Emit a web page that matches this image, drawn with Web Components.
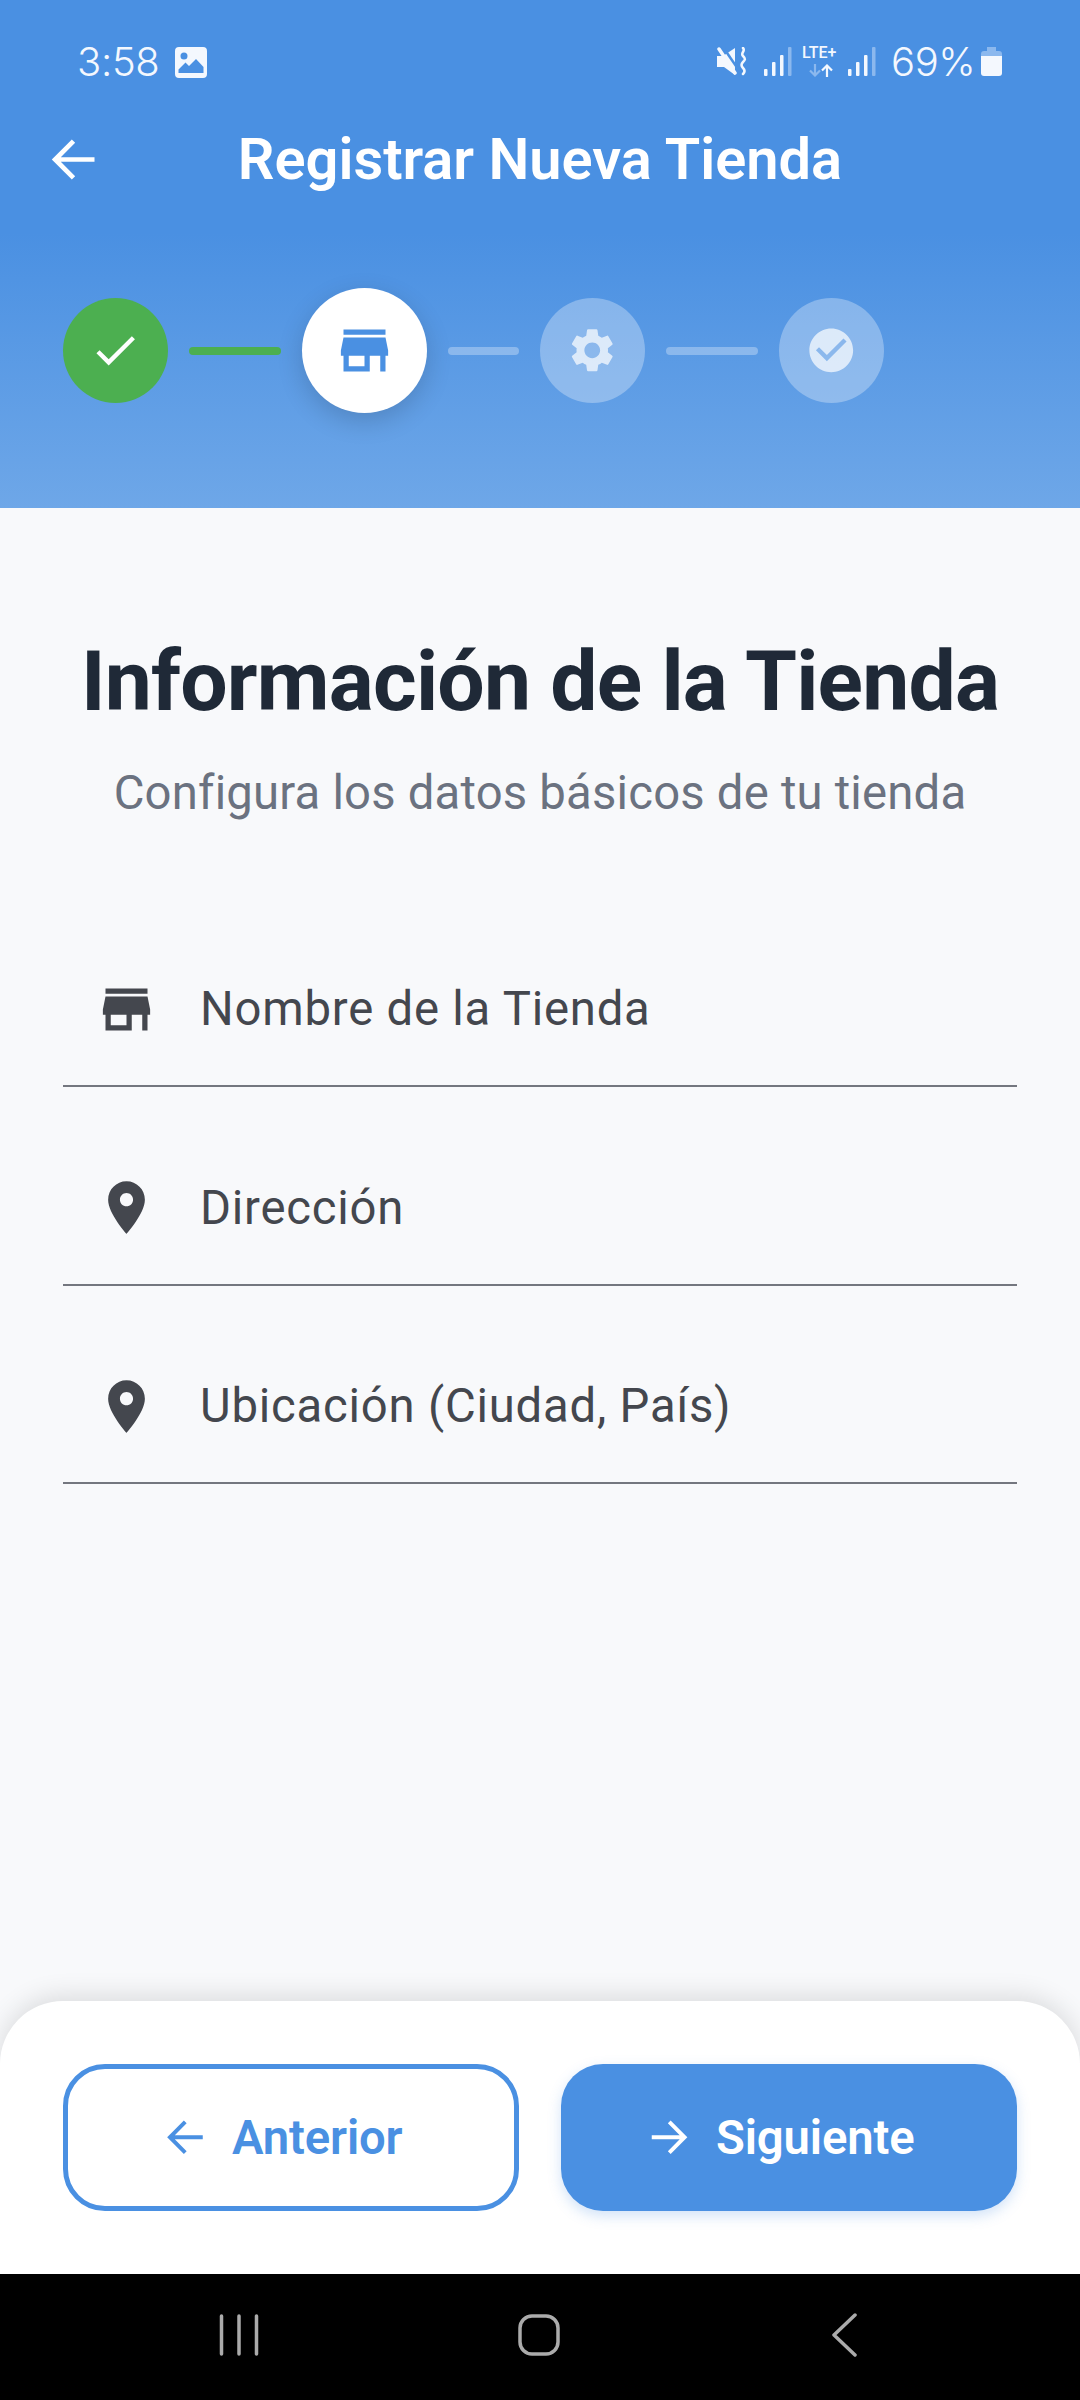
<!DOCTYPE html>
<html lang="es">
<head>
<meta charset="utf-8">
<title>Registrar Nueva Tienda</title>
<style>
  html, body { margin: 0; padding: 0; }
  body { width: 1080px; height: 2400px; overflow: hidden; font-family: Roboto, "Liberation Sans", sans-serif; }
</style>
</head>
<body>
<app-screen>
  <status-bar slot="header"></status-bar>
  <app-bar slot="header">Registrar Nueva Tienda</app-bar>
  <step-bar slot="header">
    <step-dot state="done" icon="check"></step-dot>
    <step-line state="done" style="--w:92px"></step-line>
    <step-dot state="active" icon="store"></step-dot>
    <step-line style="--w:71px"></step-line>
    <step-dot icon="settings"></step-dot>
    <step-line style="--w:92px"></step-line>
    <step-dot icon="check_circle"></step-dot>
  </step-bar>

  <form-heading title="Información de la Tienda" sub="Configura los datos básicos de tu tienda"></form-heading>
  <text-field icon="store">Nombre de la Tienda</text-field>
  <text-field icon="place">Dirección</text-field>
  <text-field icon="place">Ubicación (Ciudad, País)</text-field>

  <action-bar slot="footer">
    <action-button icon="arrow_back" kind="outline">Anterior</action-button>
    <action-button icon="arrow_forward" kind="filled">Siguiente</action-button>
  </action-bar>
  <nav-bar slot="footer"></nav-bar>
</app-screen>

<script>
  // Material icon paths, all on a 24 box
  const ICONS = {
    check: 'M9 16.17L4.83 12l-1.42 1.41L9 19 21 7l-1.41-1.41z',
    store: 'M20 4H4v2h16V4zm1 10v-2l-1-5H4l-1 5v2h1v6h10v-6h4v6h2v-6h1zm-9 4H6v-4h6v4z',
    place: 'M12 2C8.13 2 5 5.13 5 9c0 5.25 7 13 7 13s7-7.75 7-13c0-3.87-3.13-7-7-7zm0 9.5c-1.38 0-2.5-1.12-2.5-2.5s1.12-2.5 2.5-2.5 2.5 1.12 2.5 2.5-1.12 2.5-2.5 2.5z',
    settings: 'M19.14 12.94c.04-.3.06-.61.06-.94 0-.32-.02-.64-.07-.94l2.03-1.58c.18-.14.23-.41.12-.61l-1.92-3.32c-.12-.22-.37-.29-.59-.22l-2.39.96c-.5-.38-1.03-.7-1.62-.94l-.36-2.54c-.04-.24-.24-.41-.48-.41h-3.84c-.24 0-.43.17-.47.41l-.36 2.54c-.59.24-1.13.57-1.62.94l-2.39-.96c-.22-.08-.47 0-.59.22L2.74 8.87c-.12.21-.08.47.12.61l2.03 1.58c-.05.3-.09.63-.09.94s.02.64.07.94l-2.03 1.58c-.18.14-.23.41-.12.61l1.92 3.32c.12.22.37.29.59.22l2.39-.96c.5.38 1.03.7 1.62.94l.36 2.54c.05.24.24.41.48.41h3.84c.24 0 .44-.17.47-.41l.36-2.54c.59-.24 1.13-.56 1.62-.94l2.39.96c.22.08.47 0 .59-.22l1.92-3.32c.12-.22.07-.47-.12-.61l-2.01-1.58zM12 15.6c-1.98 0-3.6-1.62-3.6-3.6s1.62-3.6 3.6-3.6 3.6 1.62 3.6 3.6-1.62 3.6-3.6 3.6z',
    check_circle: 'M12 2C6.48 2 2 6.48 2 12s4.48 10 10 10 10-4.48 10-10S17.52 2 12 2zm-2 15l-5-5 1.41-1.41L10 14.17l7.59-7.59L19 8l-9 9z'
  };
  // the arrows in the reference are thinner than the filled glyphs, so these are strokes
  const ARROWS = {
    arrow_back: 'M20 12H5.200M12 5l-7 7 7 7',
    arrow_forward: 'M4 12h14.800M12 5l7 7-7 7'
  };

  const icon = (name, size) => {
    const body = ARROWS[name]
      ? `<path fill="none" stroke="currentColor" stroke-width="1.800" d="${ARROWS[name]}"/>`
      : `<path fill-rule="evenodd" d="${ICONS[name]}"/>`;
    return `<svg width="${size}" height="${size}" viewBox="0 0 24 24" fill="currentColor" style="display:block;flex:none">${body}</svg>`;
  };

  // small helper, every element here only needs a static shadow root
  const define = (tag, render) => customElements.define(tag, class extends HTMLElement {
    constructor() {
      super();
      this.attachShadow({ mode: 'open' });
    }
    connectedCallback() {
      this.shadowRoot.innerHTML = render(this);
    }
  });

  define('app-screen', () => `
    <style>
      :host { display: flex; flex-direction: column; width: 1080px; height: 2400px; background: #f8f9fb; }
      header { flex: none; background: #4a90e2; }
      main { flex: 1; min-height: 0; padding: 0 63px; box-sizing: border-box; }
      footer { flex: none; }
    </style>
    <header><slot name="header"></slot></header>
    <main><slot></slot></main>
    <footer><slot name="footer"></slot></footer>
  `);

  define('status-bar', () => {
    const signal = `<svg class="sig" width="28" height="29" viewBox="0 0 28 29"><g fill="#f4f8fe"><rect x="0" y="22" width="3.500" height="7" rx="1"/><rect x="8" y="15" width="3.500" height="14" rx="1"/><rect x="16" y="8" width="3.500" height="21" rx="1"/></g><rect x="24" y="0" width="3.500" height="29" rx="1" fill="#8bb8ee"/></svg>`;
    return `
    <style>
      :host { display: flex; align-items: flex-start; height: 86px; box-sizing: border-box; padding: 47px 78px 0 78px; color: #f4f8fe;
        font: 300 40px/29px Inter, Roboto, sans-serif; }
      .time { width: 80px; margin-left: -1px; letter-spacing: -.300px; white-space: nowrap; }
      .pic { margin-left: 18px; }
      .right { margin-left: auto; display: flex; align-items: flex-start; }
      .sig { margin-left: 17px; }
      .lte { margin-left: 10px; width: 36px; height: 29px; position: relative; }
      .lte b { display: block; font: 500 16px/12px Roboto, sans-serif; white-space: nowrap; }
      .sig2 { display: flex; margin-left: -7px; }
      .pct { margin-left: 15px; width: 84px; white-space: nowrap; letter-spacing: -.400px; }
      .bat { margin-left: 6px; }
    </style>
    <span class="time">3:58</span>
    <svg class="pic" width="32" height="31" viewBox="0 0 32 31"><path fill="#f4f8fe" fill-rule="evenodd" d="M4 0h24a4 4 0 0 1 4 4v23a4 4 0 0 1-4 4H4a4 4 0 0 1-4-4V4a4 4 0 0 1 4-4zM9 5.500a3.500 3.500 0 1 0 0 7 3.500 3.500 0 0 0 0-7zM3.500 26h25v-6l-7.500-8-7 7-3.500-3.500-7 7z"/></svg>
    <div class="right">
      <svg width="30" height="29" viewBox="0 0 30 29"><path fill="#f4f8fe" d="M0 9h6L18 1v27L7 20H0z"/><path stroke="#4a90e2" stroke-width="2.500" d="M6 0l15 22"/><path stroke="#f4f8fe" stroke-width="3.500" stroke-linecap="round" d="M2 2l16 24"/><path fill="none" stroke="#f4f8fe" stroke-width="2.500" stroke-linecap="round" d="M26 1c3 3-3 5 0 8s2 4 0 6-2 4 0 6 2 4 0 6"/></svg>
      ${signal}
      <div class="lte"><b>LTE+</b>
        <svg style="position:absolute;left:7px;top:17px" width="24" height="13" viewBox="0 0 24 13"><path fill="none" stroke="#8bb8ee" stroke-width="2.200" d="M6 0v11M1 6.500l5 5 5-5"/><path fill="none" stroke="#f4f8fe" stroke-width="2.200" d="M18 13V2M13 6.500l5-5 5 5"/></svg>
      </div>
      <div class="sig2">${signal}</div>
      <span class="pct">69%</span>
      <svg class="bat" width="21" height="29" viewBox="0 0 21 29"><path fill="#8bb8ee" d="M6 0h9v4h3a3 3 0 0 1 3 3v4H0V7a3 3 0 0 1 3-3h3z"/><path fill="#f4f8fe" d="M0 9h21v17a3 3 0 0 1-3 3H3a3 3 0 0 1-3-3z"/></svg>
    </div>
  `;
  });

  define('app-bar', () => `
    <style>
      :host { display: flex; align-items: center; height: 147px; color: #fff; font: 600 57.750px/1 Roboto, sans-serif; }
      .back { width: 147px; display: flex; justify-content: center; }
      .title { flex: 1; text-align: center; margin-left: -147px; }
    </style>
    <div class="back">${icon('arrow_back', 63)}</div>
    <div class="title"><slot></slot></div>
  `);

  define('step-bar', () => `
    <style>
      :host { display: flex; align-items: center; gap: 21px; height: 275px; box-sizing: border-box; padding: 0 63px 40px;
        background: linear-gradient(180deg, #4a90e2 0%, #6ea7e8 100%); }
    </style>
    <slot></slot>
  `);

  define('step-dot', (el) => {
    const state = el.getAttribute('state');
    const name = el.getAttribute('icon');
    const size = state === 'active' ? 63 : 52.5;
    return `
    <style>
      :host { display: flex; align-items: center; justify-content: center; flex: none; border-radius: 50%;
        width: 105px; height: 105px; background: rgba(255,255,255,.3); color: rgba(255,255,255,.7); }
      :host([state=done]) { background: #4caf50; color: #fff; }
      :host([state=active]) { width: 125px; height: 125px; background: #fff; color: #4a90e2;
        box-shadow: 0 8px 26px rgba(0,0,0,.16); }
    </style>
    ${icon(name, size)}`;
  });

  define('step-line', () => `
    <style>
      :host { display: block; flex: none; width: var(--w); height: 8px; border-radius: 4px; background: rgba(255,255,255,.3); }
      :host([state=done]) { background: #4caf50; }
    </style>
  `);

  define('form-heading', (el) => `
    <style>
      :host { display: block; text-align: center; padding-top: 130px; margin: 0 -20px 115px; }
      h1 { margin: 0; font: 700 84px/88px Roboto, sans-serif; letter-spacing: -.800px; color: #1f2937; }
      p { margin: 42px 0 0; font: 400 47.250px/50px Roboto, sans-serif; letter-spacing: .200px; color: #6b7280; }
    </style>
    <h1>${el.getAttribute('title')}</h1>
    <p>${el.getAttribute('sub')}</p>
  `);

  define('text-field', (el) => `
    <style>
      :host { display: flex; align-items: center; height: 154px; box-sizing: border-box; border-bottom: 2px solid #74777f;
        margin-bottom: 44.500px; color: #44474e; }
      .ic { width: 126px; display: flex; justify-content: center; flex: none; }
      .label { padding-left: 11px; font: 400 47.250px/50px Roboto, sans-serif; letter-spacing: .790px; }
    </style>
    <div class="ic">${icon(el.getAttribute('icon'), 63)}</div>
    <div class="label"><slot></slot></div>
  `);

  define('action-bar', () => `
    <style>
      :host { display: grid; grid-template-columns: minmax(0, 1fr) minmax(0, 1fr); gap: 42px; height: 273px; box-sizing: border-box;
        padding: 63px; background: #fff; border-radius: 63px 63px 0 0; box-shadow: 0 -5px 26px rgba(0,0,0,.12); position: relative; }
    </style>
    <slot></slot>
  `);

  define('action-button', (el) => `
    <style>
      :host { display: flex; align-items: center; justify-content: center; gap: 21px; height: 147px; box-sizing: border-box;
        padding-right: 21px; border-radius: 42px; font: 600 47.250px/1 Roboto, sans-serif; letter-spacing: -.150px; }
      :host([kind=outline]) { border: 5px solid #4a90e2; color: #4a90e2; background: #fff; }
      :host([kind=filled]) { background: #4a90e2; color: #fff; box-shadow: 0 5px 13px rgba(74,144,226,.25); }
      slot { display: block; padding-top: 2px; }
    </style>
    ${icon(el.getAttribute('icon'), 52.5)}
    <slot></slot>
  `);

  define('nav-bar', () => `
    <style>
      :host { display: flex; align-items: center; height: 126px; box-sizing: border-box;
        padding: 0 0 4px 218px; background: #000; }
      svg { display: block; flex: none; }
      .home { margin-left: 258px; }
      .back { margin-left: 271px; }
    </style>
    <svg width="42" height="42" viewBox="0 0 42 42" fill="none" stroke="#ababab" stroke-width="3.500" stroke-linecap="round"><path d="M3.500 2v38M21 2v38M38.500 2v38"/></svg>
    <svg class="home" width="42" height="42" viewBox="0 0 42 42" fill="none" stroke="#ababab" stroke-width="3.500"><rect x="2" y="2" width="38" height="38" rx="12"/></svg>
    <svg class="back" width="27" height="44" viewBox="0 0 27 44" fill="none" stroke="#ababab" stroke-width="3.500" stroke-linecap="round" stroke-linejoin="round"><path d="M24 2L3 22l21 20"/></svg>
  `);
</script>
</body>
</html>
